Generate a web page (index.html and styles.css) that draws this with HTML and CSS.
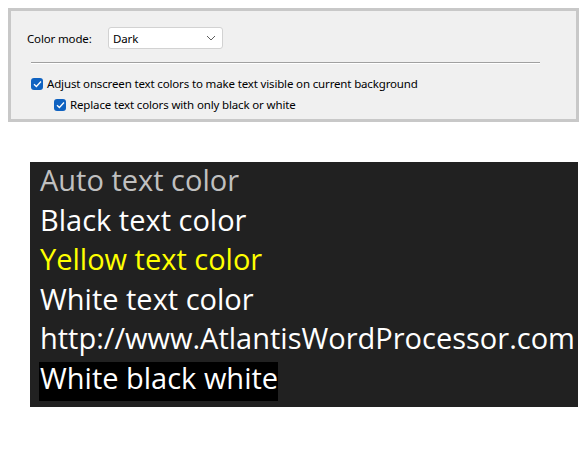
FILE: index.html
```html
<!DOCTYPE html>
<html>
<head>
<meta charset="utf-8">
<link rel="stylesheet" href="styles.css">
</head>
<body>
<div class="panel">
  <div class="mode-row">
    <span class="label">Color mode:</span>
    <div class="select">
      <span>Dark</span>
      <svg class="chev" width="10" height="6" viewBox="0 0 10 6"><path d="M1 1 L5 5 L9 1" fill="none" stroke="#5f5f5f" stroke-width="1"/></svg>
    </div>
  </div>
  <div class="sep"></div>
  <div class="check-row">
    <span class="cb"><svg width="9" height="8" viewBox="0 0 9 8"><path d="M1 4.2 L3.4 6.5 L8 1.5" fill="none" stroke="#fff" stroke-width="1.3"/></svg></span>
    <span>Adjust onscreen text colors to make text visible on current background</span>
  </div>
  <div class="check-row sub">
    <span class="cb"><svg width="9" height="8" viewBox="0 0 9 8"><path d="M1 4.2 L3.4 6.5 L8 1.5" fill="none" stroke="#fff" stroke-width="1.3"/></svg></span>
    <span>Replace text colors with only black or white</span>
  </div>
</div>

<div class="doc">
  <div class="line auto">Auto text color</div>
  <div class="line">Black text color</div>
  <div class="line yellow">Yellow text color</div>
  <div class="line">White text color</div>
  <div class="line">http://www.AtlantisWordProcessor.com</div>
  <div class="line"><span class="hl">White black white</span></div>
</div>
</body>
</html>
```
FILE: styles.css
```css
html, body {
  margin: 0;
  padding: 0;
  background: #ffffff;
}
body {
  padding: 8px 0 0 0;
  font-family: "Noto Sans", "Open Sans", sans-serif;
}
.panel {
  margin-left: 8px;
  width: 571px;
  height: 114px;
  box-sizing: border-box;
  border: 3px solid #c8c8c8;
  background: #f0f0f0;
  padding: 16px 0 0 16px;
  font-size: 11.5px;
  letter-spacing: -0.15px;
  color: #000;
}
.mode-row {
  display: flex;
  align-items: center;
  height: 22px;
}
.label {
  width: 81px;
}
.select {
  box-sizing: border-box;
  width: 115px;
  height: 22px;
  background: #fff;
  border: 1px solid #d2d2d2;
  border-radius: 3px;
  display: flex;
  align-items: center;
  justify-content: space-between;
  padding: 0 6px 0 4px;
}
.chev {
  display: block;
}
.sep {
  margin: 13px 0 0 4px;
  width: 509px;
  height: 1px;
  background: #a0a0a0;
  border-bottom: 1px solid #ffffff;
}
.check-row {
  display: flex;
  align-items: center;
  gap: 4px;
  margin-left: 4px;
  height: 21px;
  margin-top: 9px;
}
.check-row.sub {
  margin-left: 27px;
  margin-top: 0;
}
.cb {
  width: 12px;
  height: 12px;
  border-radius: 3px;
  background: #0f62c1;
  display: flex;
  align-items: center;
  justify-content: center;
}
.cb svg {
  display: block;
}
.doc {
  margin: 40px 0 0 30px;
  width: 548px;
  height: 245px;
  box-sizing: border-box;
  background: #212121;
  padding: 2px 0 0 9px;
  font-family: "Open Sans", sans-serif;
  font-size: 29px;
  color: #ffffff;
}
.line {
  height: 39.5px;
  line-height: 32.5px;
  white-space: nowrap;
  padding-left: 1px;
}
.auto {
  color: #c0c0c0;
}
.yellow {
  color: #ffff00;
}
.hl {
  display: inline-block;
  background: #000000;
  line-height: 32.5px;
  height: 39px;
  margin-left: -1px;
  padding-left: 1px;
}
```
